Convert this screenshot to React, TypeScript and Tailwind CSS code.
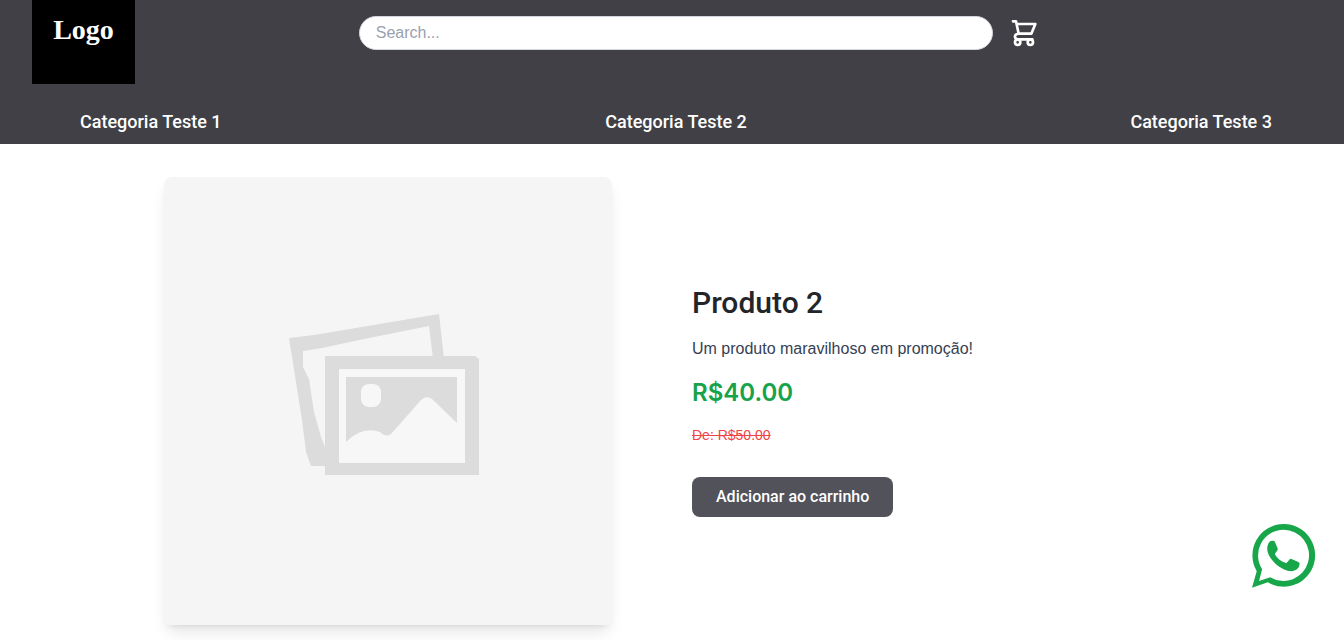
import { useState } from "react";

const categories = ["Categoria Teste 1", "Categoria Teste 2", "Categoria Teste 3"];

const CartIcon = () => (
  <svg
    viewBox="0 0 84 84"
    className="h-7 w-7"
    fill="none"
    stroke="currentColor"
    strokeWidth="8"
    strokeLinecap="round"
    strokeLinejoin="round"
  >
    <path d="M12 7h9l8 37h38L79 15H24" />
    <path d="M29 44c-8 1-12 5-11 10 1 5 5 7 10 7h42" />
    <circle cx="26" cy="70" r="8" />
    <circle cx="64" cy="70" r="8" />
  </svg>
);

const WhatsappIcon = () => (
  <svg viewBox="36 44 190 190" className="h-16 w-16" fill="currentColor">
    <path
      fillRule="evenodd"
      d="M130 44A93 93 0 1 1 83 217L36 233L50 184A93 93 0 0 1 130 44ZM130 61A76 76 0 1 1 90 202L57 213L66 178A76 76 0 0 1 130 61Z"
    />
    <path d="M88 97c3-3 8-4 12-3 3 0 4 3 5 6l7 16c1 3 0 6-2 8l-5 7c-1 2-1 3 0 5 7 11 17 19 30 23 2 1 4 0 5-1l8-9c2-2 3-2 5-1l19 8c4 2 6 4 5 8-1 12-12 19-24 20-14 0-33-10-45-20-12-11-24-27-26-39-2-11 0-21 6-28Z" />
  </svg>
);

const PlaceholderImage = () => (
  <svg viewBox="0 0 448 448" className="w-full" role="img" aria-label="Produto 2">
    <rect width="448" height="448" fill="#f5f5f5" />
    <path
      fill="#dcdcdc"
      d="M125 161L150 158L275 137L280 182H269L265 149L200 162L158 171L139 174L139 190L145 202L150 235L157 260L163 275V289H147L142 275L138 243L134 218Z"
    />
    <path fill="#dcdcdc" d="M161 179H311L315 182V298H161Z" />
    <rect x="175" y="192" width="126" height="94" fill="#f7f7f7" />
    <path fill="#dcdcdc" d="M182 200H293V246L268 222Q262 218 257 223L227 257Q222 261 216 255Q198 249 182 265Z" />
    <rect x="197" y="207" width="20" height="23" rx="8" fill="#f7f7f7" />
  </svg>
);

export default function App() {
  const [search, setSearch] = useState("");

  return (
    <div className="min-h-screen bg-white font-['Liberation_Sans',sans-serif]">
      <header className="bg-[#404046] text-white">
        <div className="flex items-start px-8">
          <a
            href="#"
            className="flex h-[84px] w-[103px] justify-center bg-black pt-3 font-['Liberation_Serif',serif] text-[28px] leading-9 font-bold"
          >
            Logo
          </a>
          <div className="mx-auto flex w-[57%] items-center gap-4 pt-4">
            <input
              type="text"
              aria-label="Search"
              placeholder="Search..."
              value={search}
              onChange={(e) => setSearch(e.target.value)}
              className="w-[87%] rounded-full border border-gray-300 bg-white px-4 py-1 text-base text-black outline-none placeholder:text-gray-400"
            />
            <button type="button" aria-label="Carrinho">
              <CartIcon />
            </button>
          </div>
        </div>
        <nav className="flex justify-between pt-6 pr-18 pb-2 pl-20">
          {categories.map((category) => (
            <a key={category} href="#" className="font-['Roboto',sans-serif] text-lg font-medium">
              {category}
            </a>
          ))}
        </nav>
      </header>

      <main className="mx-auto flex max-w-[1016px] items-center gap-20 pt-[33px]">
        <div className="w-[448px] overflow-hidden rounded-lg shadow-lg">
          <PlaceholderImage />
        </div>
        <div className="flex flex-1 flex-col items-start gap-4">
          <h1 className="font-['Roboto',sans-serif] text-3xl font-medium text-[#222529]">Produto 2</h1>
          <p className="text-base text-gray-700">Um produto maravilhoso em promoção!</p>
          <p className="font-['Inter',sans-serif] text-2xl font-semibold text-[#16a34a]">R$40.00</p>
          <p className="text-sm text-[#ef4444] line-through">De: R$50.00</p>
          <button
            type="button"
            className="mt-4 h-10 rounded-lg bg-[#52525b] px-6 font-['Roboto',sans-serif] text-base font-medium text-white"
          >
            Adicionar ao carrinho
          </button>
        </div>
      </main>

      <a href="#" aria-label="WhatsApp" className="fixed right-7 bottom-13 text-[#18a64b]">
        <WhatsappIcon />
      </a>
    </div>
  );
}
